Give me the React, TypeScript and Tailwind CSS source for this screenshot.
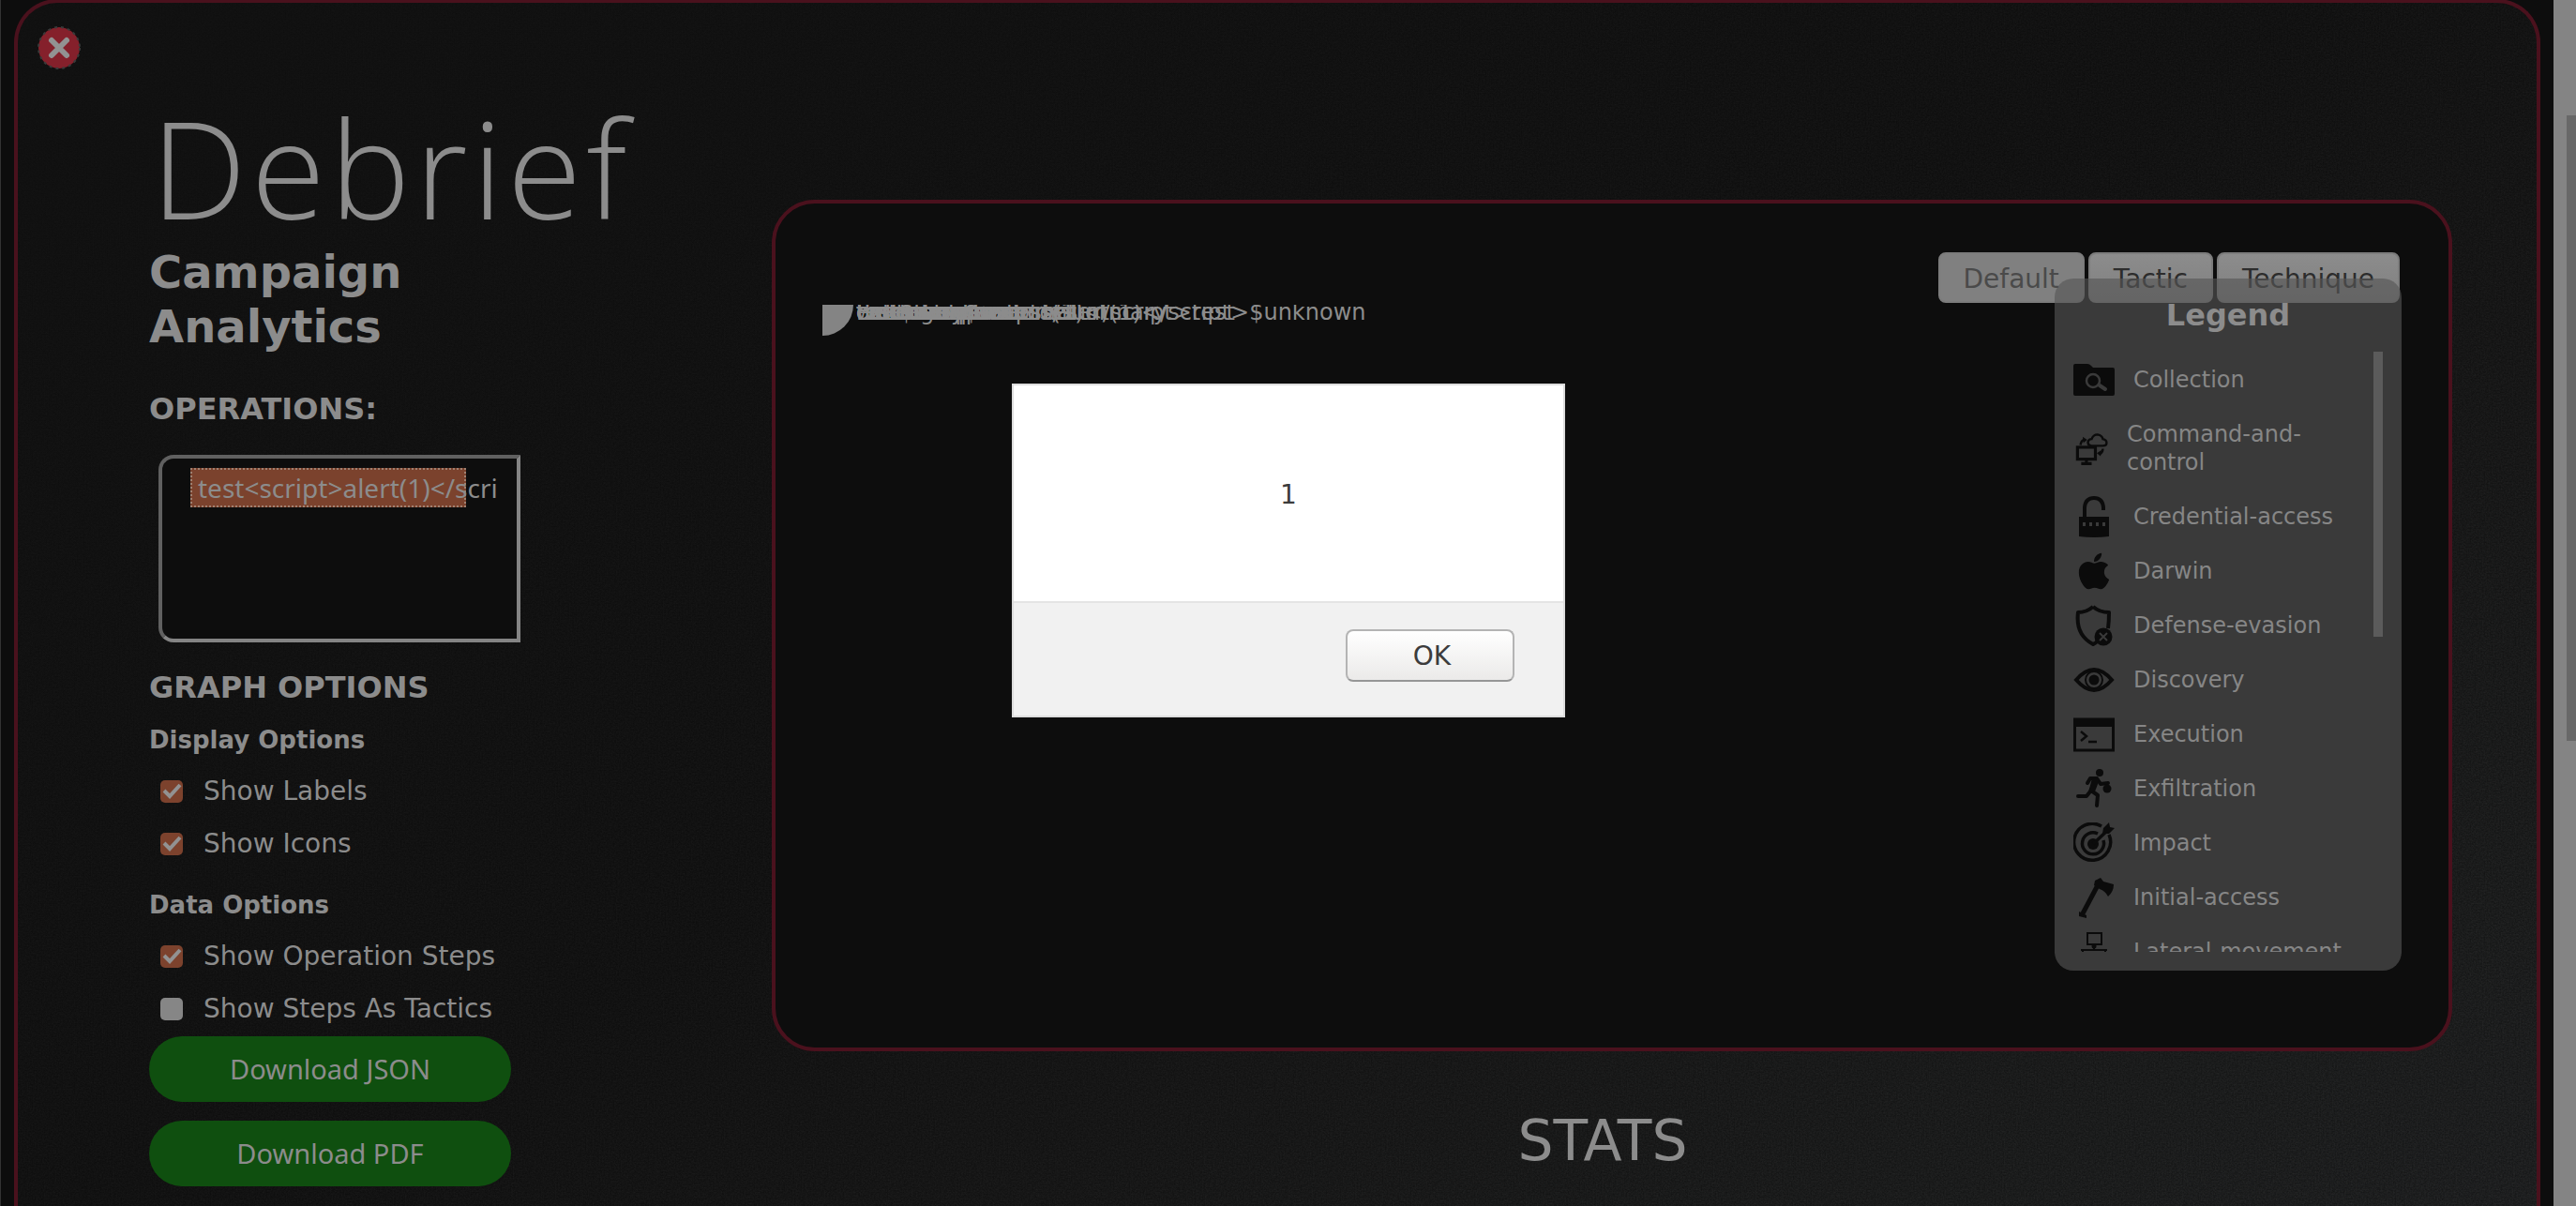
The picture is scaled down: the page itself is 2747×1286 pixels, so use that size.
import React from 'react';
import { FaApple } from 'react-icons/fa';

const ink = '#0b0b0b';
const back = '#3a3a3a';

function CollectionIcon() {
  return (
    <>
      <path fill={ink} d="M0 7Q0 5 2 5H15Q17 5 19 7L21 9H42Q44 9 44 11V37Q44 39 42 39H2Q0 39 0 37Z" />
      <circle cx="21" cy="23" r="7" fill="none" stroke={back} strokeWidth="2.5" />
      <path stroke={back} strokeWidth="4" strokeLinecap="round" d="M28 28L34 32" />
    </>
  );
}

function CommandIcon() {
  return (
    <g fill="none" stroke={ink} strokeWidth="4">
      <rect x="3" y="20" width="24" height="16" />
      <path d="M15 37V41M8 42H22" />
      <path d="M22 18Q17 18 17 13Q18 9 22 9Q24 3 30 3Q36 4 37 9Q42 10 42 14Q42 18 37 18Z" strokeWidth="3" />
      <path d="M7 17Q8 11 12 10M37 22Q37 27 33 29" strokeWidth="3" />
      <path d="M10 6L16 10L11 14ZM35 24L29 28L34 32Z" fill={ink} stroke="none" />
    </g>
  );
}

function CredentialIcon() {
  return (
    <>
      <path fill="none" stroke={ink} strokeWidth="4" d="M12 23V12Q13 2 22 2Q31 2 32 12V15" />
      <path fill={ink} d="M6 22H38V43Q22 45 6 43Z" />
      <path stroke={back} strokeWidth="4" strokeDasharray="3 4" d="M10 30H35" />
    </>
  );
}

function DefenseIcon() {
  return (
    <>
      <path
        fill="none"
        stroke={ink}
        strokeWidth="4"
        strokeLinejoin="round"
        d="M21 2Q14 8 5 8Q2 32 21 42Q24 41 26 38M21 2Q28 8 38 8Q38 18 37 25"
      />
      <circle cx="32" cy="34" r="9.5" fill={ink} />
      <path stroke={back} strokeWidth="2" d="M28 30L36 38M36 30L28 38" />
    </>
  );
}

function DiscoveryIcon() {
  return (
    <>
      <path fill="none" stroke={ink} strokeWidth="4" d="M3 22Q22 0 41 22Q22 44 3 22Z" />
      <circle cx="22" cy="22" r="9" fill="none" stroke={ink} strokeWidth="2" />
      <circle cx="22" cy="22" r="5.5" fill={ink} />
    </>
  );
}

function ExecutionIcon() {
  return (
    <>
      <rect x="1.5" y="6" width="41" height="33" fill="none" stroke={ink} strokeWidth="3" />
      <rect x="0" y="5" width="44" height="9" fill={ink} />
      <path fill="none" stroke={ink} strokeWidth="2.5" d="M8 19L14 24L8 29M16 30H25" />
    </>
  );
}

function ExfiltrationIcon() {
  return (
    <>
      <circle cx="28" cy="5" r="4" fill={ink} />
      <path
        fill="none"
        stroke={ink}
        strokeWidth="4"
        strokeLinejoin="round"
        strokeLinecap="round"
        d="M15 16L18 11H25L18 25L14 30H5M25 11L29 17L37 16M19 24L26 29L25 40"
      />
      <path fill={ink} d="M20 11L28 12L23 25L16 26Z" />
      <circle cx="36" cy="22" r="4.5" fill={ink} />
    </>
  );
}

function ImpactIcon() {
  return (
    <>
      <g fill="none" stroke={ink} strokeWidth="3.5">
        <path d="M30 4A19.5 19.5 0 1 0 38 13" />
        <path d="M26 12A11.5 11.5 0 1 0 32 19" />
      </g>
      <circle cx="21" cy="23" r="6" fill={ink} />
      <path stroke={ink} strokeWidth="3.5" d="M21 23L39 6" />
      <path fill={ink} d="M31 12L32 6L38 0L39 5L44 6L38 12Z" />
    </>
  );
}

function InitialIcon() {
  return (
    <>
      <path stroke={ink} strokeWidth="5" d="M9 41L27 7" />
      <path fill={ink} d="M6 37L14 41V44L6 42ZM23 4L29 1L32 5L43 8Q43 16 37 21Q34 15 28 13L22 9Z" />
    </>
  );
}

function LateralIcon() {
  return (
    <>
      <rect x="15" y="2" width="15" height="12" fill="none" stroke={ink} strokeWidth="2" />
      <path fill="none" stroke={ink} strokeWidth="2" d="M22 15V20M8 20H36M10 26V20M34 26V20" />
      <circle cx="22" cy="16" r="2.5" fill={ink} />
    </>
  );
}

const legend: { label: string; icon: React.ReactNode; wrap?: boolean }[] = [
  { label: 'Collection', icon: <CollectionIcon /> },
  { label: 'Command-and-control', icon: <CommandIcon />, wrap: true },
  { label: 'Credential-access', icon: <CredentialIcon /> },
  { label: 'Darwin', icon: <FaApple size={44} color={ink} /> },
  { label: 'Defense-evasion', icon: <DefenseIcon /> },
  { label: 'Discovery', icon: <DiscoveryIcon /> },
  { label: 'Execution', icon: <ExecutionIcon /> },
  { label: 'Exfiltration', icon: <ExfiltrationIcon /> },
  { label: 'Impact', icon: <ImpactIcon /> },
  { label: 'Initial-access', icon: <InitialIcon /> },
  { label: 'Lateral-movement', icon: <LateralIcon /> },
];

const nodeLabels = [
  'test$test<script>alert(1)</script>$unknown',
  'test<script>alert(1)</script>test',
  'credential-access/summary',
  'testing operations',
  'windows powershell',
  'defense-evasion',
  'command-and-control',
  'collection',
  'discovery$user',
  'Find user processes',
  'execution host',
];

function Check({ label, checked = false }: { label: string; checked?: boolean }) {
  return (
    <label className="flex h-14 items-center gap-[22px] pl-3 text-[28px]">
      <span className="relative flex size-6">
        <input
          type="checkbox"
          defaultChecked={checked}
          className="peer size-6 appearance-none rounded-[5px] bg-[#868686] checked:bg-[#7c422d]"
        />
        <svg
          viewBox="0 0 24 24"
          className="pointer-events-none absolute inset-0 hidden size-6 peer-checked:block"
          fill="none"
          stroke="#929292"
          strokeWidth="4"
        >
          <path d="M4 11L10 17L21 5" />
        </svg>
      </span>
      {label}
    </label>
  );
}

function ViewButton({ label, active = false }: { label: string; active?: boolean }) {
  return (
    <button
      type="button"
      className={
        active
          ? 'h-[54px] rounded-lg border-2 border-[#7c7c7c] bg-[#808080] px-[25px] pt-[3px] text-[28px] text-[#4a4a4a]'
          : 'h-[54px] rounded-lg border-2 border-[#7c7c7c] bg-linear-to-b from-[#8c8c8c] to-[#808080] px-[25px] pt-[3px] text-[28px] text-[#2c2c2c]'
      }
    >
      {label}
    </button>
  );
}

function Grain() {
  return (
    <svg
      aria-hidden="true"
      className="pointer-events-none absolute inset-0 size-full rounded-t-[42px] mask-linear-150 mask-linear-from-black/20 mask-linear-to-black opacity-6"
    >
      <filter id="grain" colorInterpolationFilters="sRGB">
        <feTurbulence type="fractalNoise" baseFrequency="0.6" numOctaves="2" seed="3" />
        <feColorMatrix type="saturate" values="0" />
        <feComponentTransfer>
          <feFuncR type="linear" slope="2" intercept="-0.6" />
          <feFuncG type="linear" slope="2" intercept="-0.6" />
          <feFuncB type="linear" slope="2" intercept="-0.6" />
          <feFuncA type="linear" slope="0" intercept="1" />
        </feComponentTransfer>
      </filter>
      <rect width="100%" height="100%" filter="url(#grain)" />
    </svg>
  );
}

export default function App() {
  return (
    <div className="relative flex h-screen overflow-hidden border-l border-[#333333] bg-[#0d0d0d] font-['DejaVu_Sans',sans-serif] text-[#8c8c8c]">
      <section className="relative -mt-px mr-[14px] ml-[14px] flex flex-1 rounded-t-[46px] border-4 border-b-0 border-[#4a111d] bg-[linear-gradient(150deg,#101010_0%,#0f0f0f_50%,#131313_66%,#171818_88%,#191a1b_100%)]">
        <Grain />
        <div className="relative w-[140px] shrink-0 pt-[25px] pl-[21px]">
          <button type="button" aria-label="Close" className="block size-[46px]">
            <svg viewBox="0 0 46 46" className="size-[46px]">
              <circle cx="23" cy="23" r="22" fill="#85202b" />
              <circle cx="23" cy="23" r="22" fill="none" stroke="#3a3a3a" strokeWidth="2" strokeDasharray="3 4" />
              <path d="M15 15L31 31M31 15L15 31" stroke="#929292" strokeWidth="6" strokeLinecap="round" />
            </svg>
          </button>
        </div>

        <aside className="relative w-[386px] shrink-0 pt-[90px]">
          <h1 className="w-max pl-[2px] font-['Open_Sans',sans-serif] text-[144px] leading-[170px] font-light tracking-[5px]">
            Debrief
          </h1>
          <h2 className="-mt-[2px] text-[48px] leading-[58px] font-bold">Campaign Analytics</h2>
          <h3 className="mt-[40px] text-[32px] leading-[38px] font-bold">
            <label htmlFor="operations">OPERATIONS:</label>
          </h3>
          <select
            id="operations"
            multiple
            defaultValue={['op']}
            className="mt-[30px] ml-[10px] block h-[200px] w-[386px] overflow-hidden rounded-l-2xl border-4 border-t-[#606060] border-r-[#848484] border-b-[#848484] border-l-[#606060] bg-[#0d0d0d] px-[30px] py-[10px]"
          >
            <option
              value="op"
              className="h-[42px] w-[294px] overflow-visible border-2 border-dotted border-[#a08070] bg-[linear-gradient(#7b422d,#7b422d)] px-[6px] py-0 font-['Noto_Sans',sans-serif] text-[28px] leading-[38px] whitespace-nowrap text-[#8c8c8c]"
            >
              {'test<script>alert(1)</scri'}
            </option>
          </select>
          <h3 className="mt-[29px] text-[32px] leading-[38px] font-bold">GRAPH OPTIONS</h3>
          <h4 className="mt-5 mb-[10px] text-[26px] leading-[34px] font-bold">Display Options</h4>
          <Check label="Show Labels" checked />
          <Check label="Show Icons" checked />
          <h4 className="mt-5 mb-[10px] text-[26px] leading-[34px] font-bold">Data Options</h4>
          <Check label="Show Operation Steps" checked />
          <Check label="Show Steps As Tactics" />
          <div className="flex flex-col gap-5 pt-px font-['Noto_Sans',sans-serif] text-[29px]">
            <button type="button" className="h-[70px] rounded-full bg-[#0f4f0f]">
              Download JSON
            </button>
            <button type="button" className="h-[70px] rounded-full bg-[#0f4f0f]">
              Download PDF
            </button>
          </div>
        </aside>

        <main className="relative mr-[90px] ml-[278px] flex flex-1 flex-col pt-[210px]">
          <div className="relative flex h-[908px] flex-col rounded-[46px] border-4 border-[#4a111d] bg-[#0d0d0d] px-[50px] pt-[52px]">
            <div className="mr-[2px] flex justify-end gap-1">
              <ViewButton label="Default" active />
              <ViewButton label="Tactic" />
              <ViewButton label="Technique" />
            </div>
            <svg className="mt-[2px] block h-[600px] w-full" fontSize="24" fill="#8c8c8c">
              <circle cx="0" cy="0" r="33" fill="#848484" />
              {nodeLabels.map((t) => (
                <text key={t} x="36" y="16">
                  {t}
                </text>
              ))}
            </svg>
            <div className="absolute top-20 right-[50px] flex h-[738px] w-[370px] flex-col rounded-[20px] bg-[#555555]/63 pt-[18px] pb-5">
              <h3 className="text-center text-[32px] leading-[42px] font-bold">Legend</h3>
              <div className="mt-[18px] flex min-h-0 flex-1 pr-5 pl-5">
                <ul className="min-w-0 flex-1 overflow-hidden pt-px pr-8">
                  {legend.map(({ label, icon, wrap }) => (
                    <li
                      key={label}
                      className="flex items-center gap-5 py-[14px] text-[24px] leading-[30px] text-[#868686]"
                    >
                      <svg
                        viewBox="0 0 44 44"
                        className={wrap ? '-my-2 ml-[2px] size-[35px] shrink-0' : '-my-2 size-[44px] shrink-0'}
                      >
                        {icon}
                      </svg>
                      <span className={wrap ? 'w-48' : 'whitespace-nowrap'}>{label}</span>
                    </li>
                  ))}
                </ul>
                <div className="h-[304px] w-[10px] bg-[#5b5b5b]" />
              </div>
            </div>
          </div>
          <h2 className="mt-[59px] pr-5 text-center text-[60px] leading-[72px]">STATS</h2>
        </main>
      </section>

      <div className="w-6 bg-[#848484] pt-[123px] pl-[14px]">
        <div className="h-[667px] bg-[#686868]" />
      </div>

      <div
        role="alertdialog"
        aria-describedby="alert-text"
        className="absolute top-[409px] left-1/2 flex h-[356px] w-[590px] -translate-x-1/2 flex-col border-2 border-[#dddddd] bg-white text-[28px] text-[#3c3c3c]"
      >
        <p id="alert-text" className="flex flex-1 items-center justify-center pt-1">
          1
        </p>
        <div className="flex h-[122px] justify-end border-t-2 border-[#e4e4e4] bg-[#f1f1f1] pt-7 pr-[52px]">
          <button
            type="button"
            className="h-14 w-[180px] rounded-lg border-2 border-[#b4b4b4] border-b-[#969696] bg-linear-to-b from-white to-[#ebeae9] pt-[2px] pl-1"
          >
            OK
          </button>
        </div>
      </div>
    </div>
  );
}
